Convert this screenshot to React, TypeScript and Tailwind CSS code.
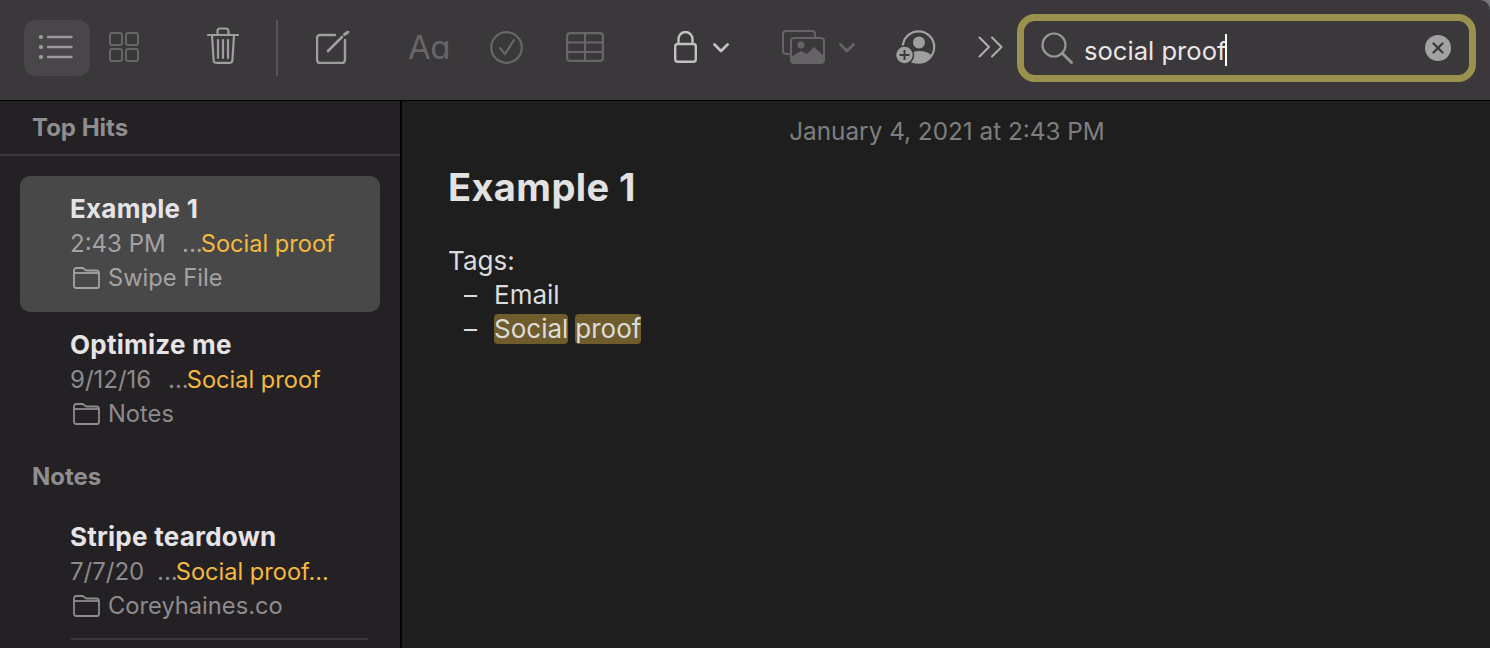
const font = { fontFamily: 'Inter, "Noto Sans", sans-serif' };

function Toolbar() {
  return (
    <div className="flex h-[100px] shrink-0 items-center rounded-tr-[10px] bg-[#3a383a] pb-1 pl-6">
      <div className="flex h-14 w-[66px] items-center justify-center rounded-xl bg-[#484648]">
        <svg className="mb-0.5 mr-0.5" width="34" height="24" viewBox="0 0 34 24" fill="none" stroke="#9a989a" strokeWidth="2.400" strokeLinecap="round">
          <path d="M9 2h23.500M9 12h23.500M9 22h23.500" />
          <path d="M1.800 2h.4M1.800 12h.4M1.800 22h.4" strokeWidth="4" />
        </svg>
      </div>
      <svg className="mb-0.5 ml-[19px]" width="30" height="30" viewBox="0 0 30 30" fill="none" stroke="#676567" strokeWidth="2">
        <rect x="1" y="1" width="12" height="12" rx="2" />
        <rect x="17" y="1" width="12" height="12" rx="2" />
        <rect x="1" y="17" width="12" height="12" rx="2" />
        <rect x="17" y="17" width="12" height="12" rx="2" />
      </svg>
      <svg className="mb-1.5 ml-[68px]" width="32" height="37" viewBox="0 0 32 37" fill="none" stroke="#a09ea0" strokeWidth="2.200" strokeLinecap="round">
        <path d="M1 8h30M5 8l1.600 25.500a2.500 2.500 0 0 0 2.500 2.300h13.800a2.500 2.500 0 0 0 2.500-2.300L27 8" />
        <path d="M10.500 8V4a2.500 2.500 0 0 1 2.500-2.500h6A2.500 2.500 0 0 1 21.500 4v4" />
        <path d="M11 13v18M16 13v18M21 13v18" />
      </svg>
      <div className="ml-[37px] h-14 w-0.5 bg-[#575557]" />
      <svg className="mb-0.5 ml-[38px]" width="34" height="33" viewBox="0 0 34 33" fill="none" stroke="#a09ea0" strokeWidth="2.400" strokeLinecap="round">
        <path d="M19 4H4a3 3 0 0 0-3 3v22a3 3 0 0 0 3 3h22a3 3 0 0 0 3-3V9" />
        <path d="M12 20 L26 6" strokeWidth="2.600" />
        <path d="M28.500 3.500 L32 1" strokeWidth="3" />
      </svg>
      <span className="mb-0.5 ml-[58px] w-[41px] text-[33px] leading-none tracking-[-0.5px] text-[#686668] [font-feature-settings:'cv11']">Aa</span>
      <svg className="mb-0.5 ml-[41px]" width="33" height="33" viewBox="0 0 33 33" fill="none" stroke="#686668" strokeWidth="2.200" strokeLinecap="round" strokeLinejoin="round">
        <circle cx="16.500" cy="16.500" r="15.300" />
        <path d="M10 17l5 6 9-14" />
      </svg>
      <svg className="mb-0.5 ml-[43px]" width="38" height="30" viewBox="0 0 38 30" fill="none" stroke="#686668" strokeWidth="2.200">
        <rect x="1.100" y="1.100" width="35.800" height="27.800" rx="3" />
        <path d="M1 10.500h36M1 20h36M19 1v28" />
      </svg>
      <svg className="mb-0.5 ml-[70px]" width="23" height="32" viewBox="0 0 23 32" fill="none" stroke="#c2c0c2" strokeWidth="2.400">
        <rect x="1.200" y="13" width="20.600" height="17.800" rx="2.500" />
        <path d="M4.500 13V8a7 7 0 0 1 14 0v5" />
      </svg>
      <svg className="ml-4" width="16" height="10" viewBox="0 0 16 10" fill="none" stroke="#c2c0c2" strokeWidth="2.800" strokeLinecap="round" strokeLinejoin="round">
        <path d="M1.500 1.500 8 8l6.500-6.500" />
      </svg>
      <svg className="mb-0.5 ml-[53px]" width="43" height="34" viewBox="0 0 43 34" fill="none">
        <path d="M9 24H4a3 3 0 0 1-3-3V4a3 3 0 0 1 3-3h26a3 3 0 0 1 3 3v3" stroke="#656365" strokeWidth="2" />
        <rect x="9" y="8" width="33" height="25" rx="3" stroke="#656365" strokeWidth="2" fill="#3a383a" />
        <path d="M9 33v-6l10-6 6 3 7-7 10 9v7z" fill="#656365" />
        <circle cx="19" cy="15" r="3.500" fill="#656365" />
      </svg>
      <svg className="ml-3.5" width="16" height="10" viewBox="0 0 16 10" fill="none" stroke="#656365" strokeWidth="2.800" strokeLinecap="round" strokeLinejoin="round">
        <path d="M1.500 1.500 8 8l6.500-6.500" />
      </svg>
      <svg className="mb-0.5 ml-[41px]" width="40" height="34" viewBox="0 0 40 34" fill="none">
        <circle cx="22.500" cy="17" r="15.700" stroke="#a09ea0" strokeWidth="2.200" />
        <circle cx="23" cy="12.500" r="6" fill="#a09ea0" />
        <path d="M12 28q2-7 11-7t13 5a15.700 15.700 0 0 1-24 2z" fill="#a09ea0" />
        <circle cx="8.500" cy="25" r="9" fill="#a09ea0" stroke="#3a383a" strokeWidth="1.500" />
        <path d="M8.500 20v10M3.500 25h10" stroke="#3a383a" strokeWidth="2" />
      </svg>
      <svg className="mb-0.5 ml-[42px]" width="25" height="22" viewBox="0 0 25 22" fill="none" stroke="#b0aeb0" strokeWidth="2" strokeLinecap="round" strokeLinejoin="round">
        <path d="M1.500 1.500 11 11l-9.500 9.500M14 1.500 23.500 11 14 20.500" />
      </svg>
      <div className="ml-[14px] flex h-[68px] w-[459px] items-center rounded-[18px] border-[7px] border-[#9a914e] pl-[17px]">
        <svg width="32" height="32" viewBox="0 0 32 32" fill="none" stroke="#979597" strokeWidth="2.200" strokeLinecap="round">
          <circle cx="13" cy="13" r="11.500" />
          <path d="M21.500 21.500 30.500 30.500" strokeWidth="2.800" />
        </svg>
        <span className="ml-[11px] mt-[5px] text-[25.600px] leading-8 text-[#e8e6e8]">social proof</span>
        <span className="-ml-0.5 mt-[4px] h-8 w-0.5 bg-white" />
        <div className="ml-auto mr-[18px] flex h-[26px] w-[26px] items-center justify-center rounded-full bg-[#a3a1a3]">
          <svg width="12" height="12" viewBox="0 0 12 12" stroke="#3a383a" strokeWidth="2.200" strokeLinecap="round">
            <path d="M1.500 1.500l9 9M10.500 1.500l-9 9" />
          </svg>
        </div>
      </div>
    </div>
  );
}

function FolderIcon({ color }: { color: string }) {
  return (
    <svg width="27" height="22" viewBox="0 0 27 22" fill="none" stroke={color} strokeWidth="1.800" strokeLinejoin="round">
      <path d="M1 6V3.500A2.500 2.500 0 0 1 3.500 1h6c1.500 0 2 2 3.500 2.500h10.500A2.500 2.500 0 0 1 26 6v13a2 2 0 0 1-2 2H3a2 2 0 0 1-2-2z" />
      <path d="M1 6h25" />
    </svg>
  );
}

function NoteRow({ title, date, gap, snippet, folder, selected }: any) {
  const muted = selected ? 'text-[#a4a2a4]' : 'text-[#8d8b8d]';
  return (
    <div className={`h-[136px] rounded-[10px] pl-[50px] pt-4 leading-[34px] ${selected ? 'bg-[#484848]' : ''}`}>
      <div className="mb-px text-[26px] font-bold tracking-[0.25px] text-[#e6e4e6]">{title}</div>
      <div className={`flex whitespace-nowrap text-[24px] ${muted}`}>
        <span style={{ width: gap }}>{date}</span>
        <span>...</span>
        <span className="-ml-0.5 text-[23.600px] text-[#f5b93f]">{snippet}</span>
      </div>
      <div className={`flex items-center text-[23.700px] ${muted}`}>
        <span className="ml-[3px] mr-2">
          <FolderIcon color={selected ? '#a4a2a4' : '#8d8b8d'} />
        </span>
        {folder}
      </div>
    </div>
  );
}

function Sidebar() {
  return (
    <aside className="w-[402px] shrink-0 overflow-hidden border-r-2 border-black bg-[#242125]">
      <div className="flex h-[55px] items-center border-b-2 border-[#3b383b] pl-8 text-[24px] font-bold text-[#8f8d8f]">
        Top Hits
      </div>
      <div className="px-5 pt-5">
        <NoteRow title="Example 1" date="2:43 PM" gap={112} snippet="Social proof" folder="Swipe File" selected />
        <NoteRow title="Optimize me" date="9/12/16" gap={98} snippet="Social proof" folder="Notes" />
      </div>
      <div className="flex h-14 items-center pl-8 pt-0.5 text-[24px] font-bold text-[#8f8d8f]">Notes</div>
      <div className="px-5">
        <NoteRow title="Stripe teardown" date="7/7/20" gap={87} snippet="Social proof..." folder="Coreyhaines.co" />
        <div className="-mt-0.5 ml-[51px] mr-3 h-0.5 bg-[#3b383b]" />
      </div>
    </aside>
  );
}

function Editor() {
  return (
    <main className="min-w-0 flex-1 bg-[#1e1e1e] text-[26px] leading-[34px] text-[#dcdcdc]">
      <div className="pl-0.5 pt-[13px] text-center text-[24.300px] text-[#7e7e7e]">January 4, 2021 at 2:43 PM</div>
      <div className="pl-[46px]">
        <h1 className="mt-4 text-[38px] font-bold leading-[46px] tracking-[0.4px] text-[#e2e2e2]">Example 1</h1>
        <div className="mt-[34px]">Tags:</div>
        <div className="flex pl-4">
          <span className="w-[30px]">–</span>
          <span>Email</span>
        </div>
        <div className="flex items-center pl-4">
          <span className="w-[30px]">–</span>
          <span className="h-[30px] rounded bg-[#6e5c2c] leading-[30px]">Social</span>
          <span className="ml-[7px] h-[30px] rounded bg-[#6e5c2c] leading-[30px]">proof</span>
        </div>
      </div>
    </main>
  );
}

export default function App() {
  return (
    <div className="flex h-[648px] w-[1490px] flex-col overflow-hidden bg-[#77757a]" style={font}>
      <Toolbar />
      <div className="h-px shrink-0 bg-black" />
      <div className="flex min-h-0 flex-1">
        <Sidebar />
        <Editor />
      </div>
    </div>
  );
}
